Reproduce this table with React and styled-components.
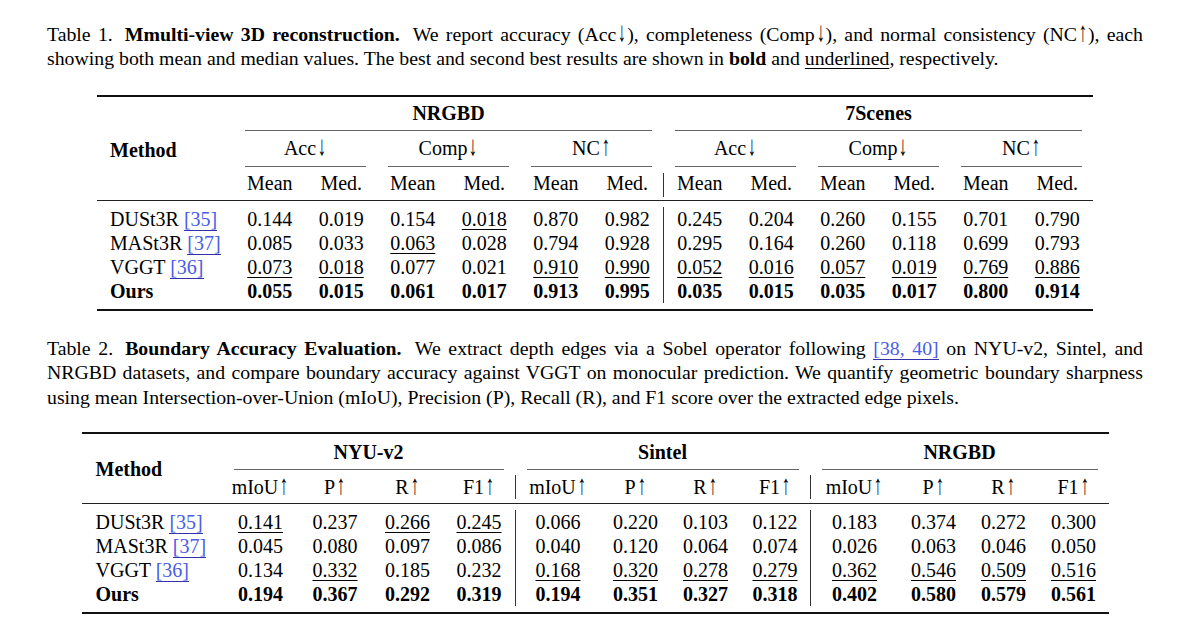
import React from 'react';
import styled, { createGlobalStyle } from 'styled-components';

const GlobalStyle = createGlobalStyle`
  html, body {
    margin: 0;
    padding: 0;
    background: #ffffff;
  }
  body {
    font-family: "Liberation Serif", "Times New Roman", serif;
    color: #000;
  }
`;

// table 1: method + 6 cols | 6 cols
const COLS_1 = '137px repeat(6, 71.5px) 1px repeat(6, 71.5px)';
// table 2: method + 4 | 4 | 4
const COLS_2 = '141px 76px 73px 72px 71px 1px 85px 70px 70px 69px 1px 88px 70px 70px 70px';

const TABLE_1 = [
  { name: 'DUSt3R', cite: '35', vals: ['0.144', '0.019', '0.154', '_0.018', '0.870', '0.982', '0.245', '0.204', '0.260', '0.155', '0.701', '0.790'] },
  { name: 'MASt3R', cite: '37', vals: ['0.085', '0.033', '_0.063', '0.028', '0.794', '0.928', '0.295', '0.164', '0.260', '0.118', '0.699', '0.793'] },
  { name: 'VGGT', cite: '36', vals: ['_0.073', '_0.018', '0.077', '0.021', '_0.910', '_0.990', '_0.052', '_0.016', '_0.057', '_0.019', '_0.769', '_0.886'] },
  { name: 'Ours', bold: true, vals: ['0.055', '0.015', '0.061', '0.017', '0.913', '0.995', '0.035', '0.015', '0.035', '0.017', '0.800', '0.914'] },
];

const TABLE_2 = [
  { name: 'DUSt3R', cite: '35', vals: ['_0.141', '0.237', '_0.266', '_0.245', '0.066', '0.220', '0.103', '0.122', '0.183', '0.374', '0.272', '0.300'] },
  { name: 'MASt3R', cite: '37', vals: ['0.045', '0.080', '0.097', '0.086', '0.040', '0.120', '0.064', '0.074', '0.026', '0.063', '0.046', '0.050'] },
  { name: 'VGGT', cite: '36', vals: ['0.134', '_0.332', '0.185', '0.232', '_0.168', '_0.320', '_0.278', '_0.279', '_0.362', '_0.546', '_0.509', '_0.516'] },
  { name: 'Ours', bold: true, vals: ['0.194', '0.367', '0.292', '0.319', '0.194', '0.351', '0.327', '0.318', '0.402', '0.580', '0.579', '0.561'] },
];

const Page = styled.div`
  width: 1096px;
  padding: 22px 0 0 47px;
  display: flex;
  flex-direction: column;
  align-items: center;
`;

const Caption = styled.div`
  width: 100%;
  margin-top: ${p => p.$gap || 0}px;
  font-size: 19.8px;
  line-height: 24.4px;
`;

const Line = styled.span`
  display: block;
  text-align: justify;
  text-align-last: ${p => (p.$last ? 'left' : 'justify')};
`;

const Title = styled.b`
  font-weight: 700;
  margin: 0 6px 0 12px;
`;

const Under = styled.span`
  text-decoration: underline;
  text-decoration-thickness: 1px;
  text-underline-offset: 3px;
`;

const Cite = styled.span`
  color: #4a5de6;
  border-bottom: 1px solid #3131a8;
`;

// thin tall arrow, like the math \uparrow / \downarrow
const Arrow = styled.span`
  display: inline-block;
  transform: scale(0.85, 1.4);
  transform-origin: 50% 80%;
  margin-left: 1px;
`;

const Table = styled.div`
  width: ${p => p.$width}px;
  margin-top: ${p => p.$gap}px;
  border-top: 2px solid #111;
  border-bottom: 2px solid #111;
  font-size: 20px;
  line-height: 24px;
`;

const Head = styled.div`
  display: grid;
  grid-template-columns: ${p => p.$cols};
  grid-template-rows: ${p => p.$rows};
  border-bottom: 1px solid #222;
`;

const HeadCell = styled.div`
  grid-column: ${p => p.$col};
  grid-row: ${p => p.$row};
  display: flex;
  align-items: center;
  justify-content: center;
  white-space: nowrap;
  font-weight: ${p => (p.$bold ? 700 : 400)};
`;

const MethodHead = styled.div`
  grid-column: 1;
  grid-row: 1 / -1;
  display: flex;
  align-items: center;
  padding: ${p => p.$top}px 0 0 ${p => p.$pad}px;
  font-weight: 700;
`;

const CMid = styled.div`
  grid-column: ${p => p.$col};
  grid-row: ${p => p.$row};
  margin: 0 11px;
  background: #666;
`;

const Bar = styled.div`
  grid-column: ${p => p.$col || 'auto'};
  grid-row: ${p => p.$row || 'auto'};
  width: 1px;
  margin: ${p => p.$margin || '0'};
  background: #333;
`;

const Body = styled.div`
  display: grid;
  grid-template-columns: ${p => p.$cols};
  grid-auto-rows: 24px;
  padding: 6px 0;
`;

const NameCell = styled.div`
  padding-left: ${p => p.$pad}px;
  white-space: nowrap;
  font-weight: ${p => (p.$bold ? 700 : 400)};
`;

const ValueCell = styled.div`
  text-align: center;
  font-weight: ${p => (p.$bold ? 700 : 400)};
`;

const Value = ({ v }) =>
  v.startsWith('_') ? <Under>{v.slice(1)}</Under> : <>{v}</>;

// "Acc↓" -> Acc + arrow glyph
const Metric = ({ label }) => {
  const last = label.slice(-1);
  if (last === '↑' || last === '↓') {
    return (
      <>
        {label.slice(0, -1)}
        <Arrow>{last}</Arrow>
      </>
    );
  }
  return <>{label}</>;
};

const BodyRows = ({ rows, seps, pad }) => (
  <>
    {rows.map(row => {
      const cells = [
        <NameCell key="name" $pad={pad} $bold={row.bold}>
          {row.name}
          {row.cite && (
            <>
              {' '}
              <Cite>[{row.cite}]</Cite>
            </>
          )}
        </NameCell>,
      ];
      row.vals.forEach((v, i) => {
        if (seps.includes(i)) cells.push(<Bar key={'bar' + i} />);
        cells.push(
          <ValueCell key={i} $bold={row.bold}>
            <Value v={v} />
          </ValueCell>
        );
      });
      return <React.Fragment key={row.name}>{cells}</React.Fragment>;
    })}
  </>
);

const metrics1 = [
  ['Acc↓', '2 / 4'],
  ['Comp↓', '4 / 6'],
  ['NC↑', '6 / 8'],
  ['Acc↓', '9 / 11'],
  ['Comp↓', '11 / 13'],
  ['NC↑', '13 / 15'],
];

const ReconTable = () => (
  <Table $width={996} $gap={24}>
    <Head $cols={COLS_1} $rows="33px 1px 35px 1px 33px">
      <MethodHead $pad={13} $top={4}>Method</MethodHead>
      <HeadCell $col="2 / 8" $row="1" $bold>NRGBD</HeadCell>
      <HeadCell $col="9 / 15" $row="1" $bold>7Scenes</HeadCell>
      <CMid $col="2 / 8" $row="2" />
      <CMid $col="9 / 15" $row="2" />
      {metrics1.map(([label, col], i) => (
        <React.Fragment key={i}>
          <HeadCell $col={col} $row="3"><Metric label={label} /></HeadCell>
          <CMid $col={col} $row="4" />
        </React.Fragment>
      ))}
      {Array.from({ length: 12 }).map((_, i) => (
        <HeadCell key={i} $col={i < 6 ? i + 2 : i + 3} $row="5">
          {i % 2 === 0 ? 'Mean' : 'Med.'}
        </HeadCell>
      ))}
      <Bar $col="8" $row="5" $margin="6px 0 3px" />
    </Head>
    <Body $cols={COLS_1}>
      <BodyRows rows={TABLE_1} seps={[6]} pad={13} />
    </Body>
  </Table>
);

const groups2 = [
  ['NYU-v2', 2],
  ['Sintel', 7],
  ['NRGBD', 12],
];
const metrics2 = ['mIoU↑', 'P↑', 'R↑', 'F1↑'];

const BoundaryTable = () => (
  <Table $width={1027} $gap={23}>
    <Head $cols={COLS_2} $rows="35px 1px 33px">
      <MethodHead $pad={14} $top={0}>Method</MethodHead>
      {groups2.map(([name, start]) => (
        <React.Fragment key={name}>
          <HeadCell $col={`${start} / ${start + 4}`} $row="1" $bold>{name}</HeadCell>
          <CMid $col={`${start} / ${start + 4}`} $row="2" />
          {metrics2.map((m, i) => (
            <HeadCell key={m} $col={start + i} $row="3"><Metric label={m} /></HeadCell>
          ))}
        </React.Fragment>
      ))}
      <Bar $col="6" $row="3" $margin="5px 0 4px" />
      <Bar $col="11" $row="3" $margin="5px 0 4px" />
    </Head>
    <Body $cols={COLS_2}>
      <BodyRows rows={TABLE_2} seps={[4, 8]} pad={14} />
    </Body>
  </Table>
);

export default function App() {
  return (
    <>
      <GlobalStyle />
      <Page>
        <Caption>
          <Line>
            Table 1.<Title>Mmulti-view 3D reconstruction.</Title> We report accuracy (Acc<Arrow>↓</Arrow>), completeness (Comp<Arrow>↓</Arrow>), and normal consistency (NC<Arrow>↑</Arrow>), each
          </Line>
          <Line $last>
            showing both mean and median values. The best and second best results are shown in <b>bold</b> and <Under>underlined</Under>, respectively.
          </Line>
        </Caption>
        <ReconTable />
        <Caption $gap={25}>
          <Line>
            Table 2.<Title>Boundary Accuracy Evaluation.</Title> We extract depth edges via a Sobel operator following <Cite>[38, 40]</Cite> on NYU-v2, Sintel, and
          </Line>
          <Line>
            NRGBD datasets, and compare boundary accuracy against VGGT on monocular prediction. We quantify geometric boundary sharpness
          </Line>
          <Line $last>
            using mean Intersection-over-Union (mIoU), Precision (P), Recall (R), and F1 score over the extracted edge pixels.
          </Line>
        </Caption>
        <BoundaryTable />
      </Page>
    </>
  );
}
